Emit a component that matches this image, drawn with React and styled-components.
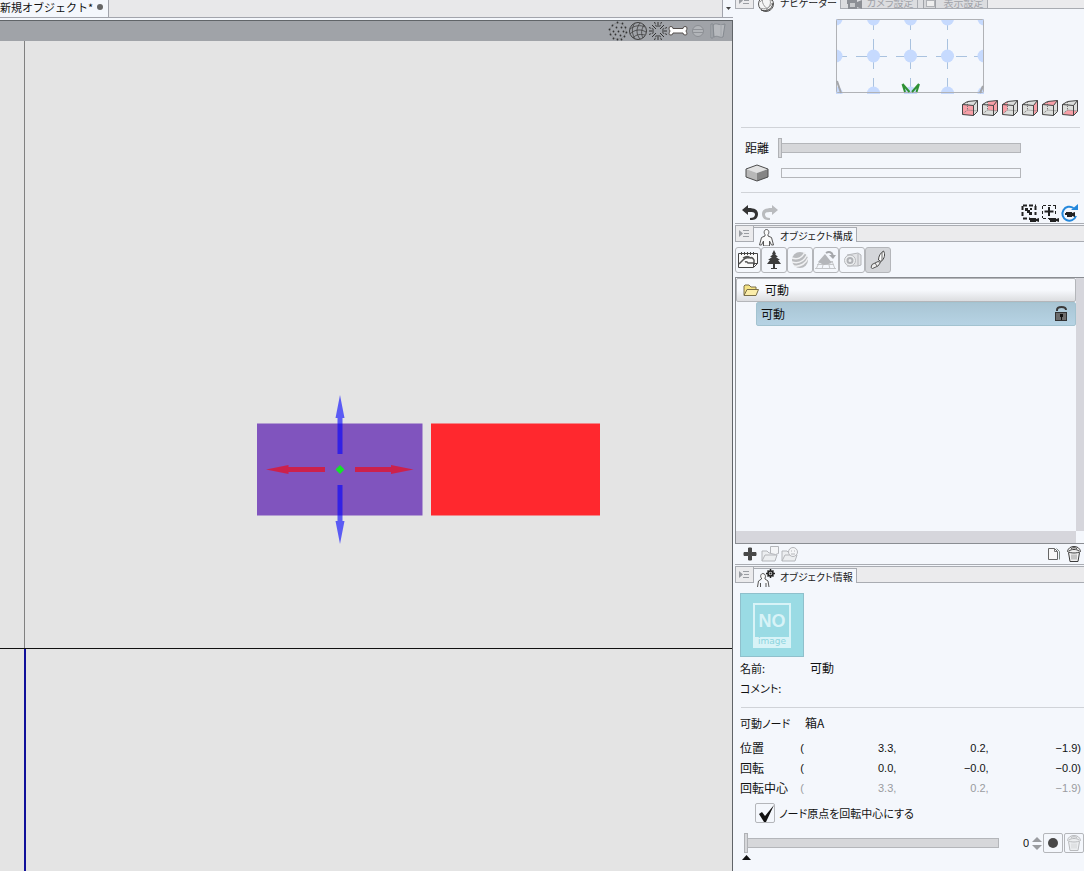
import { useState } from "react";
import styled, { createGlobalStyle } from "styled-components";

const GlobalStyle = createGlobalStyle`
  * {
    box-sizing: border-box;
  }
  body {
    margin: 0;
    overflow: hidden;
    background-color: #f4f7fc;
    color: #111;
    font-family: "Noto Sans CJK JP", sans-serif;
    font-size: 12px;
    line-height: 20px;
  }
  button, input {
    font: inherit;
    color: inherit;
  }
  svg {
    display: block;
    flex: none;
  }
`;

const Layout = styled.div`
  display: flex;
  height: 100vh;
  overflow: hidden;
`;

/* ---------- workspace ---------- */

const Workspace = styled.main`
  flex: 1;
  min-width: 0;
  display: flex;
  flex-direction: column;
`;

const DocumentTabs = styled.div`
  display: flex;
  justify-content: space-between;
  height: 18px;
  margin-bottom: 2px;
  background-color: #e8e8ea;
  border-bottom: 1px solid #a2a4ac;
`;

const DocumentTab = styled.button`
  display: flex;
  align-items: center;
  gap: 4px;
  height: 17px;
  padding: 0 5px 4px 0;
  border: none;
  border-right: 1px solid #a2a4ac;
  background-color: #f4f7fc;
  font-size: 11px;
  line-height: 14px;
`;

const UnsavedDot = styled.span`
  width: 6px;
  height: 6px;
  border-radius: 50%;
  background-color: #666;
`;

const TabMenuButton = styled.button`
  display: flex;
  align-items: center;
  justify-content: center;
  width: 11px;
  padding: 0;
  border: none;
  border-left: 1px solid #a2a4ac;
  background-color: #f4f7fc;
`;

const Viewport = styled.div`
  flex: 1;
  min-height: 0;
  display: flex;
  flex-direction: column;
  border-top: 1px solid #606468;
  border-right: 1px solid #606468;
`;

const ViewToolbar = styled.div`
  display: flex;
  justify-content: flex-end;
  align-items: center;
  height: 20px;
  padding-right: 4px;
  background-color: #a0a3a8;
`;

const IconButton = styled.button`
  display: flex;
  align-items: center;
  justify-content: center;
  width: 20px;
  height: 20px;
  padding: 0;
  border: none;
  background: none;
`;

const Scene = styled.svg`
  flex: 1;
  width: 100%;
  min-height: 0;
  background-color: #e4e4e4;
`;

/* ---------- side panels ---------- */

const Sidebar = styled.aside`
  width: 351px;
  flex: none;
  display: flex;
  flex-direction: column;
  padding-left: 2px;
`;

const Panel = styled.section`
  display: flex;
  flex-direction: column;
  flex: ${(props) => (props.$grow ? 1 : "none")};
  margin-bottom: 1px;
  border-bottom: ${(props) => (props.$grow ? "none" : "1px solid #a9acb2")};
`;

const HeaderClip = styled.div`
  display: flex;
  align-items: flex-end;
  height: ${(props) => (props.$scrolled ? "9px" : "17px")};
`;

const PanelHeader = styled.header`
  display: flex;
  align-items: flex-end;
  flex: 1;
  height: 17px;
  border-top: 1px solid #a9acb2;
  border-bottom: 1px solid #a9acb2;
  background-color: #ebebed;
`;

const PanelMenuButton = styled.button`
  display: flex;
  align-items: center;
  justify-content: center;
  width: 19px;
  height: 15px;
  padding: 0;
  border: solid #a9acb2;
  border-width: 0 1px;
  background: none;
`;

const PanelTab = styled.button`
  display: flex;
  align-items: flex-start;
  gap: 4px;
  height: ${(props) => (props.$active ? "15px" : "14px")};
  margin-bottom: ${(props) => (props.$active ? "-1px" : "0")};
  padding: 0 3px 0 ${(props) => (props.$active ? "2px" : "4px")};
  border: solid #a9acb2;
  border-width: 1px 1px 0 0;
  background-color: ${(props) => (props.$active ? "#f4f7fc" : "#dcdde0")};
  color: ${(props) => (props.$active ? "#222" : "#a0a2a8")};
  font-size: 10px;
  font-feature-settings: "palt";
  line-height: 15px;
  white-space: nowrap;
`;

const NavigatorMap = styled.div`
  display: flex;
  justify-content: center;
  padding-top: 10px;
`;

const CubeRow = styled.div`
  display: flex;
  justify-content: flex-end;
  padding: 4px 4px 9px 0;
`;

const Divider = styled.hr`
  width: auto;
  height: 1px;
  margin: 0 ${(props) => (props.$wide ? "0" : "4px")} 0 6px;
  border: none;
  background-color: #d0d3d8;
`;

const SliderRows = styled.div`
  display: grid;
  grid-template-columns: 33px 1fr;
  align-items: center;
  grid-auto-rows: 25px;
  padding: 7px 63px 7px 10px;
`;

const RangeInput = styled.input`
  appearance: none;
  display: block;
  width: 100%;
  min-width: 0;
  height: 20px;
  margin: 0;
  padding-left: ${(props) => (props.$bare ? "3px" : "0")};
  background: none;

  &::-webkit-slider-runnable-track {
    height: 10px;
    border: 1px solid #b4b6ba;
    background-color: ${(props) => (props.$bare ? "#f4f7fc" : "#d6d7da")};
  }
  &::-webkit-slider-thumb {
    appearance: none;
    width: 4px;
    height: 20px;
    margin: -6px 0 0 -1px;
    border: 1px solid #b0b2b6;
    background-color: #d6d7da;
    visibility: ${(props) => (props.$bare ? "hidden" : "visible")};
  }
`;

const ActionRow = styled.div`
  display: flex;
  align-items: center;
  justify-content: space-between;
  height: 20px;
  margin-top: ${(props) => (props.$spaced ? "10px" : "0")};
  padding: 0 ${(props) => (props.$spaced ? "4px" : "0")} 0 5px;
`;

const Group = styled.div`
  display: flex;
`;

const FilterBar = styled.div`
  display: flex;
  padding: 5px 0 4px;
`;

const FilterButton = styled.button`
  display: flex;
  align-items: center;
  justify-content: center;
  width: 26px;
  height: 26px;
  padding: 0;
  border: 1px solid #b4b6ba;
  border-radius: 3px;
  background-color: ${(props) => (props.$pressed ? "#d4d6da" : "#f4f7fc")};
`;

const TreeBox = styled.div`
  display: grid;
  grid-template-columns: 1fr 8px;
  grid-template-rows: 253px 12px;
  border: solid #8a8d92;
  border-width: 1px 0 1px 1px;
`;

const Tree = styled.ul`
  margin: 0;
  padding: 0;
  list-style: none;
`;

const TreeItem = styled.li`
  display: flex;
  align-items: center;
  height: 24px;
  margin-left: ${(props) => (props.$child ? "20px" : "0")};
  padding: 0 7px 0 ${(props) => (props.$child ? "4px" : "6px")};
  gap: 6px;
  border: 1px solid ${(props) => (props.$child ? "#a3c3d0" : "#b4b6ba")};
  border-radius: 2px;
  background: ${(props) =>
    props.$child
      ? "linear-gradient(#a9c5d4, #b6d3e4)"
      : "linear-gradient(#f7f9fd 50%, #dcdde0)"};
`;

const TreeName = styled.span`
  flex: 1;
`;

const ScrollTrack = styled.div`
  background-color: #d6d6dc;
`;

const InfoBody = styled.div`
  padding: ${(props) => (props.$node ? "0" : "10px")} 0 0 5px;
`;

const Thumbnail = styled.div`
  display: flex;
  width: 64px;
  height: 64px;
  padding: 9px 12px 8px;
  border: 1px solid #8fc0cc;
  background-color: #9adbe4;
`;

const ThumbnailFrame = styled.div`
  flex: 1;
  display: flex;
  flex-direction: column;
  border: 2px solid #d8f3f7;
  color: #d8f3f7;
  font-family: "Liberation Sans", sans-serif;
  font-size: 18px;
  font-weight: bold;
  line-height: 32px;
  text-align: center;
`;

const ThumbnailCaption = styled.span`
  flex: 1;
  background-color: #d8f3f7;
  color: #8bd3de;
  font-family: "DejaVu Sans", sans-serif;
  font-size: 9px;
  line-height: 9px;
  font-weight: normal;
`;

const Fields = styled.dl`
  display: grid;
  grid-template-columns: ${(props) => (props.$node ? "65px" : "70px")} 1fr;
  margin: ${(props) => (props.$node ? "5px 0" : "1px 0 9px")};
  font-feature-settings: "palt";

  dt {
    font-size: 11px;
  }
  dd {
    margin: 0;
  }
`;

const Transform = styled.table`
  width: 100%;
  padding-right: 3px;
  table-layout: fixed;
  border-collapse: separate;
  border-spacing: 0;

  th {
    width: 59px;
    padding: 0;
    font-weight: normal;
    text-align: left;
    white-space: nowrap;
  }
  th + td {
    width: 5px;
  }
  td {
    height: 20px;
    padding: 0;
    font-family: "Liberation Sans", sans-serif;
    font-size: 11px;
    text-align: right;
    white-space: nowrap;
  }
`;

const TransformRow = styled.tr`
  td {
    color: ${(props) => (props.$muted ? "#9a9ca0" : "#111")};
  }
`;

const CheckLabel = styled.label`
  display: flex;
  align-items: center;
  gap: 4px;
  padding: 5px 0 0 15px;
  font-size: 11px;
  font-feature-settings: "palt";
`;

const Checkbox = styled.input`
  appearance: none;
  width: 20px;
  height: 20px;
  margin: 0;
  border: 1px solid #b4b6ba;
  border-radius: 2px;

  &:checked {
    background: center / 18px 18px no-repeat
      url("data:image/svg+xml,%3Csvg xmlns='http://www.w3.org/2000/svg' viewBox='0 0 18 18'%3E%3Cpath d='M3 10l3-2 3 4L18 1 10 18H8z' fill='%23111'/%3E%3C/svg%3E");
  }
`;

const FrameRow = styled.div`
  display: grid;
  grid-template-columns: 1fr 31px 10px 20px 20px;
  align-items: center;
  column-gap: 1px;
  margin-top: 10px;
  padding-left: 4px;
`;

const FrameInput = styled.input`
  width: 31px;
  padding: 0 2px 0 0;
  border: none;
  background: none;
  font-family: "Liberation Sans", sans-serif;
  font-size: 11px;
  text-align: right;
`;

const Stepper = styled.div`
  display: flex;
  flex-direction: column;
  gap: 3px;
`;

const StepButton = styled.button`
  display: flex;
  padding: 0;
  border: none;
  background: none;
`;

const SquareButton = styled(IconButton)`
  border: 1px solid #b4b6ba;
  border-radius: 2px;
`;

const Marker = styled.div`
  padding: 2px 0 0 2px;
`;

/* ---------- icons ---------- */

const Svg = ({ w = 20, h = 20, children }) => (
  <svg width={w} height={h} viewBox={`0 0 ${w} ${h}`} fill="none" aria-hidden="true">
    {children}
  </svg>
);

const DotsIcon = () => (
  <Svg>
    <circle cx="10" cy="10" r="8" stroke="#777" strokeOpacity=".4" />
    <g fill="#333">
      {[[9, 1], [14, 2], [4, 4], [8, 6], [13, 6], [17, 6], [1, 8], [5, 10], [10, 10], [15, 10], [18, 11], [2, 13], [7, 13], [12, 14], [16, 15], [5, 17], [9, 18], [13, 18]].map(
        ([x, y]) => (
          <circle key={`${x}-${y}`} cx={x + 0.5} cy={y + 0.5} r=".9" />
        )
      )}
    </g>
  </Svg>
);

const MeshIcon = () => (
  <Svg>
    <circle cx="10" cy="10" r="8.500" stroke="#404040" />
    <g stroke="#404040" strokeWidth=".8">
      <path d="M2 8C7 4 13 4 17 6M2 13C7 8 13 8 18 11M5 17C8 13 13 13 17 14M7 2C3 7 4 13 7 18M12 2C8 7 8 13 12 18M16 4C13 9 13 13 15 17" />
    </g>
  </Svg>
);

const NormalsIcon = () => (
  <Svg>
    <g stroke="#333">
      <path d="M10 1v5M10 14v5M1 10h5M14 10h5M4 4l4 4M12 12l4 4M16 4l-4 4M8 12l-4 4" />
      <path d="M6.500 1l2 5M13.500 1l-2 5M6.500 19l2-5M13.500 19l-2-5M1 6.500l5 2M1 13.500l5-2M19 6.500l-5 2M19 13.500l-5-2" strokeDasharray="2 1" />
    </g>
  </Svg>
);

const BoneIcon = () => (
  <Svg>
    <path
      d="M1 7q0-1.500 2-1.500t2 2h10q0-2 2-2t2 1.500-1 3q1 2 1 3t-2 1-2-2H5q0 2-2 2t-2-1 1-3q-1-1.500-1-3z"
      fill="#fff"
      stroke="#55504e"
    />
  </Svg>
);

const ShadeIcon = () => (
  <Svg>
    <circle cx="10" cy="10" r="5.500" stroke="#8b8e93" fill="#b2b5b9" />
    <path d="M5 8.500h10M5 11.500h10" stroke="#8f9297" />
  </Svg>
);

const FlagIcon = () => (
  <Svg>
    <path d="M3 3h2v14H3zM5 4c4-3 5 1 12-1l-2 13c-4 1-5-2-9 0z" fill="#b6b9bd" stroke="#858a90" />
    <path d="M13 3v12" stroke="#a2a6ab" />
  </Svg>
);

const MenuIcon = () => (
  <Svg w={11} h={9}>
    <path d="M0 1l4 3.500L0 8zM4 1h6v1H4zM5 4h5v1H5zM4 7h6v1H4z" fill="#9a9da2" />
  </Svg>
);

const SphereIcon = () => (
  <Svg w={20} h={18}>
    <circle cx="10" cy="9" r="7.500" fill="#f5f5f5" stroke="#555" />
    <path d="M4 7c3-4 9-4 12-1M4 13c5 2 10 0 12-5M7 3c-2 4 1 9 6 12M12 2c4 4 3 9-2 13" stroke="#999" />
    <path d="M5 15c5 2 11 0 12-7" stroke="#444" />
  </Svg>
);

const CameraTabIcon = () => (
  <Svg w={18} h={15}>
    <path d="M2 3h10v4l5-2v9l-5-2v2H3V9H2z" fill="#8c8f95" />
    <rect x="5" y="8" width="5" height="4" fill="#c8cacd" />
  </Svg>
);

const DisplayTabIcon = () => (
  <Svg w={18} h={15}>
    <rect x="1.500" y="1.500" width="12" height="12" fill="#d5d6d9" stroke="#a0a3a8" />
    <rect x="4.500" y="5.500" width="8" height="6" fill="#eee" stroke="#b0b2b6" />
  </Svg>
);

const FigureIcon = () => (
  <Svg w={20} h={18}>
    <path
      d="M9 6.500C7.500 5 8 1.500 10.500 1.500S13.500 5 12 6.500V8l3.500 1.500L17.500 17h-2l-2-4v5h-6v-5l-2 4h-2L5.500 9.500 9 8z"
      fill="#fbfbfb"
      stroke="#555"
    />
  </Svg>
);

const FigureGearIcon = () => (
  <Svg w={20} h={18}>
    <path
      d="M5.500 9C4 8 4.500 4.500 7 4.500S10 8 9 9v1l3 2 1 6M5.500 9v1l-3 2-1 6M4.500 14v4M10 14v4"
      fill="#fbfbfb"
      stroke="#555"
    />
    <path d="M14.500 0v9M10 4.500h9M11.500 1.500l6 6M17.500 1.500l-6 6" stroke="#222" strokeWidth="1.500" />
    <circle cx="14.500" cy="4.500" r="2.500" fill="#ddd" stroke="#222" strokeWidth="1.500" />
    <circle cx="14.500" cy="4.500" r="1" fill="#222" />
  </Svg>
);

const NavigatorGrid = () => (
  <svg width="148" height="75" viewBox="0 0 148 75" role="img" aria-label="ナビゲーター">
    <path
      d="M37.500 0v11M37.500 20v30M37.500 59v16M74.500 0v11M74.500 20v30M74.500 59v16M111.500 0v11M111.500 20v30M111.500 59v16M0 37.500h11M20 37.500h31M60 37.500h31M100 37.500h12M112 37.500h6M120 37.500h11M138 37.500h10"
      stroke="#a9c2df"
    />
    <g fill="#c6dafe">
      {[0, 37.5, 74.5, 111.5, 148].map((x) =>
        [0, 37, 74].map((y) => <circle key={`${x}-${y}`} cx={x} cy={y} r="6.500" />)
      )}
    </g>
    <rect x=".5" y=".5" width="147" height="73" rx="1" fill="none" stroke="#b0b2b6" />
    <path d="M1 62l4 12M147 67l-3 7" stroke="#a4a6aa" strokeWidth="2" />
    <path d="M66.500 65l2.500 8M66.500 65l7 8M83 65l-2.500 8M83 65l-7 8" stroke="#2e9133" strokeWidth="2" />
  </svg>
);

const CUBE_FACES = [
  { label: "前", d: "M1.500 5.500l11 1v10l-11-1z" },
  { label: "後", d: "M7 2.500l9.500-1v10.500L7 11z" },
  { label: "左", d: "M1.500 5.500l5-3V11l-5 4.500z" },
  { label: "右", d: "M12.500 6.500l4-5v11l-4 4z" },
  { label: "上", d: "M1.500 5.500l5-3 10-1-4 5z" },
  { label: "下", d: "M1.500 15.500l5-4.500 10 1-4 4.500z" },
];

const CubeIcon = ({ face }) => (
  <Svg w={18} h={18}>
    <path d="M1.500 5.500l5-3 10-1v11l-4 4-11-1z" fill="#dcdedc" />
    <path d={face} fill="#f9a0a8" />
    <path d="M6.500 3v8l-5 4M6.500 11l10 1" stroke="#777" strokeDasharray="1 1" />
    <path d="M1.500 5.500l5-3 10-1v11l-4 4-11-1zM1.500 5.500l11 1 4-5M12.500 6.500v10" stroke="#444" />
  </Svg>
);

const BoxIcon = () => (
  <Svg w={24} h={18}>
    <path d="M1 5l11-4 11 4-11 4z" fill="#e2e2e2" />
    <path d="M1 5l11 4v8L1 13z" fill="#b8b8b8" />
    <path d="M23 5L12 9v8l11-4z" fill="#858585" />
    <path d="M1 5l11-4 11 4v8l-11 4-11-4z" stroke="#4c4c4c" />
  </Svg>
);

const UndoIcon = ({ redo }) => (
  <Svg>
    <path
      transform={redo ? "matrix(-1 0 0 1 20 0)" : undefined}
      d="M2 7l6-5v3c7 0 10 2 10 6 0 3-2 6-6 6h-2v-2c3 0 5-1 5-3.500S12 9 8 9v3z"
      fill={redo ? "#b9bbbe" : "#333"}
    />
  </Svg>
);

const FocusIcon = ({ plus }) => (
  <Svg>
    <path
      d="M3 2.500h13M2.500 3v12M15.500 3v9M3 15.500h7"
      stroke="#222"
      strokeWidth={plus ? 1 : 2}
      strokeDasharray={plus ? "3 2" : "4 2"}
    />
    {plus ? (
      <path d="M9 4v9M4.500 8.500h9" stroke="#222" strokeWidth="2" />
    ) : (
      <path d="M5 5h3v2h2v2h2v3h-3v-2H7V8H5zM10 5h2v2h-2z" fill="#222" />
    )}
    <path d="M9 15h7v1l3-1v4l-3-1v1h-6v-2H9z" fill="#222" />
  </Svg>
);

const ResetIcon = () => (
  <Svg>
    <path d="M16 13A7 7 0 1 1 13.500 5" stroke="#2488dc" strokeWidth="2" />
    <path d="M11 7h7V1z" fill="#2488dc" />
    <path d="M5 10h1v-1h6v1l3-1v5l-3-1v1H7v-2H5z" fill="#222" />
  </Svg>
);

const SceneFilterIcon = () => (
  <Svg w={22} h={20}>
    <path d="M1.500 3.500h19v10l-4 4h-15z" fill="#fafafa" stroke="#444" />
    <path d="M4.500 2v3M7.500 2v3M10.500 2v3M13.500 2v3M16.500 2v3" stroke="#444" />
    <path d="M2 14l4-4c2-2 4-3 6-2M6 8c3-2 6-2 7 0 2-1 3 0 4 2v5M8 12c2-1 3 1 3 1h6" stroke="#555" strokeWidth="1.500" />
    <path d="M16.500 17v-3.500h4" stroke="#444" />
  </Svg>
);

const TreeFilterIcon = () => (
  <Svg>
    <path
      d="M10 0l2 4h-1l3 3h-2l4 3h-2l3 4h-6v4h2v1H7v-1h2v-4H3l3-4H4l4-3H6l3-3H8z"
      fill="#3c3c3c"
    />
  </Svg>
);

const BallFilterIcon = () => (
  <Svg>
    <circle cx="10" cy="10" r="8" fill="#b9bbbe" />
    <path d="M2 8c5 2 10 0 13-6M2 12c7 2 12-1 15-7M4 16c7 1 12-3 14-8" stroke="#f0f1f3" strokeWidth="1.500" />
  </Svg>
);

const GroundFilterIcon = () => (
  <Svg w={22} h={20}>
    <path d="M4 11.500h14M2 14.500h17M0 18.500h21M5 11l-4 8M9 11l-2 8M13 11l2 8M17 11l3 8" stroke="#c4c6c9" />
    <path d="M10 4l7 9-8 2-6-3z" fill="#b4b6ba" />
    <path d="M11 3c3-2 6-1 7 3" stroke="#a5a7ab" strokeWidth="2" />
    <path d="M14 5h7l-3 4z" fill="#a5a7ab" />
  </Svg>
);

const CameraFilterIcon = () => (
  <Svg>
    <path d="M5 5l11-2 3 2v10l-3 1-11 0" fill="#e2e3e6" stroke="#b4b6ba" />
    <path d="M16 4v12" stroke="#b4b6ba" />
    <circle cx="8" cy="10.500" r="5.500" fill="#eceef0" stroke="#b8babd" />
    <circle cx="8" cy="10.500" r="2.500" stroke="#b0b2b6" strokeWidth="2" />
  </Svg>
);

const PartFilterIcon = () => (
  <Svg>
    <path d="M15.500 1c2 3 1 8-2.500 10.500L10.500 10c0-4 2-7 5-9z" fill="#fff" stroke="#444" />
    <path d="M10 11.500l2.500 1-2.500 3.500-5.500 2.500-1.500-1 1-3z" fill="#eee" stroke="#555" />
    <path d="M7 13l2 3M14 2v9" stroke="#666" />
  </Svg>
);

const FolderIcon = () => (
  <Svg w={16} h={14}>
    <path d="M1 12V3l1-1h4l2 2h5v3" fill="#f6e486" stroke="#7a6f48" />
    <path d="M1 12.500l3-6h11.500l-2.500 6z" fill="#fbedaa" stroke="#7a6f48" />
  </Svg>
);

const LockIcon = () => (
  <Svg w={14} h={18}>
    <path d="M3 6V5c0-4 9-4 9 0" stroke="#3a3a3a" strokeWidth="2" />
    <rect x="1.500" y="7.500" width="11" height="8" fill="#6c6c6c" stroke="#333" />
    <path d="M6 9h3v3H8v3H7v-3H6z" fill="#111" />
  </Svg>
);

const AddIcon = () => (
  <Svg>
    <path d="M8.500 4h3v4.500H16v3h-4.500V16h-3v-4.500H4v-3h4.500z" fill="#484848" stroke="#484848" />
  </Svg>
);

const FolderOutIcon = ({ round }) => (
  <Svg>
    <path d="M2 17V7h5l2 2h4M2 17l3-6h12l-2 6z" fill="#eceef0" stroke="#b4b6ba" />
    {round ? (
      <>
        <circle cx="13" cy="8" r="4.500" fill="#f4f5f7" stroke="#b4b6ba" />
        <path d="M11 7h1M14 7h1M11 10h4" stroke="#b4b6ba" />
      </>
    ) : (
      <path d="M10.500 2.500h8v7l-3 1-5-1z" fill="#f4f5f7" stroke="#b4b6ba" />
    )}
  </Svg>
);

const PageIcon = () => (
  <Svg>
    <path d="M4.500 4.500h6l3 3v8h-9z" fill="#f8f8f8" stroke="#666" />
    <path d="M10.500 4.500v3h3" stroke="#777" />
    <path d="M12.500 4.500l3 3v8" stroke="#7d8a84" />
  </Svg>
);

const TrashIcon = ({ faded }) => (
  <Svg w={18} h={18}>
    <g stroke={faded ? "#b9bbbe" : "#3c3c3c"} fill={faded ? "#eceef0" : "#f1f1f1"}>
      <path d="M3.500 7.500l1.500 9h8l1.500-9" />
      <path d="M7 9.500v5M9 9.500v5M11 9.500v5" strokeOpacity=".5" />
      <path d="M2.500 6.500C3 3 6 1.500 9 1.500s6 1.500 6.500 5c-3 2-10 2-13 0z" />
      <path d="M4 6c2-2 8-2 10 0M6 3.500c2-1 4-1 6 0" fill="none" />
    </g>
  </Svg>
);

const Triangle = ({ w, h, down, fill }) => (
  <Svg w={w} h={h}>
    <path d={down ? `M0 0h${w}L${w / 2} ${h}z` : `M0 ${h}h${w}L${w / 2} 0z`} fill={fill} />
  </Svg>
);

/* ---------- data ---------- */

const VIEW_TOOLS = [
  { label: "頂点", icon: DotsIcon },
  { label: "メッシュ", icon: MeshIcon },
  { label: "法線", icon: NormalsIcon },
  { label: "ボーン", icon: BoneIcon },
  { label: "陰影", icon: ShadeIcon },
  { label: "背面", icon: FlagIcon },
];

const FILTERS = [
  { label: "シーン", icon: SceneFilterIcon },
  { label: "背景", icon: TreeFilterIcon },
  { label: "素材", icon: BallFilterIcon },
  { label: "床面", icon: GroundFilterIcon },
  { label: "カメラ", icon: CameraFilterIcon },
  { label: "可動パーツ", icon: PartFilterIcon },
];

const TRANSFORMS = [
  { name: "位置", values: ["3.3", "0.2", "−1.9"] },
  { name: "回転", values: ["0.0", "−0.0", "−0.0"] },
  { name: "回転中心", values: ["3.3", "0.2", "−1.9"], muted: true },
];

function Header({ icon: Icon, title, scrolled, children }) {
  return (
    <HeaderClip $scrolled={scrolled}>
      <PanelHeader>
        <PanelMenuButton aria-label="メニュー">
          <MenuIcon />
        </PanelMenuButton>
        <PanelTab $active>
          <Icon />
          {title}
        </PanelTab>
        {children}
      </PanelHeader>
    </HeaderClip>
  );
}

function SceneView() {
  return (
    <Scene role="img" aria-label="3Dビュー">
      <g shapeRendering="crispEdges">
        <rect x="24" width="1" height="607" fill="#808080" />
        <rect x="24" y="608" width="2" height="100%" fill="#10109a" />
        <rect y="607" width="100%" height="1" fill="#111" />
      </g>
      <rect x="257" y="382.500" width="165.500" height="92" fill="#8054be" />
      <rect x="431" y="382.500" width="169" height="92" fill="#ff282e" />
      <g fill="#0000ff" fillOpacity=".6">
        <path d="M337.500 413V377H335.500L340 354l4.500 23h-2v36z" />
        <path d="M337.500 444v36h-2L340 503l4.500-23h-2v-36z" />
      </g>
      <g fill="#ff0000" fillOpacity=".6">
        <path d="M325 426H288.500v-2L266 428.500l22.500 4.500v-2H325z" />
        <path d="M355 426h36v-2l22.500 4.500L391 433v-2h-36z" />
      </g>
      <path d="M340 424l4.500 4.500L340 433l-4.500-4.500z" fill="#14e32a" />
    </Scene>
  );
}

function Navigator() {
  return (
    <Panel>
      <Header icon={SphereIcon} title="ナビゲーター" scrolled>
        <PanelTab>
          <CameraTabIcon />
          カメラ設定
        </PanelTab>
        <PanelTab>
          <DisplayTabIcon />
          表示設定
        </PanelTab>
      </Header>
      <NavigatorMap>
        <NavigatorGrid />
      </NavigatorMap>
      <CubeRow>
        {CUBE_FACES.map((face) => (
          <IconButton key={face.label} aria-label={face.label}>
            <CubeIcon face={face.d} />
          </IconButton>
        ))}
      </CubeRow>
      <Divider />
      <SliderRows>
        <label htmlFor="distance">距離</label>
        <RangeInput id="distance" type="range" defaultValue={0} />
        <label htmlFor="boxScale" aria-label="大きさ">
          <BoxIcon />
        </label>
        <RangeInput id="boxScale" type="range" defaultValue={0} disabled $bare />
      </SliderRows>
      <Divider />
      <ActionRow $spaced>
        <Group>
          <IconButton aria-label="元に戻す">
            <UndoIcon />
          </IconButton>
          <IconButton aria-label="やり直し" disabled>
            <UndoIcon redo />
          </IconButton>
        </Group>
        <Group>
          <IconButton aria-label="全体を表示">
            <FocusIcon />
          </IconButton>
          <IconButton aria-label="選択を表示">
            <FocusIcon plus />
          </IconButton>
          <IconButton aria-label="カメラをリセット">
            <ResetIcon />
          </IconButton>
        </Group>
      </ActionRow>
    </Panel>
  );
}

function ObjectTree() {
  return (
    <Panel>
      <Header icon={FigureIcon} title="オブジェクト構成" />
      <FilterBar>
        {FILTERS.map((filter, i) => (
          <FilterButton
            key={filter.label}
            aria-label={filter.label}
            $pressed={i === FILTERS.length - 1}
          >
            <filter.icon />
          </FilterButton>
        ))}
      </FilterBar>
      <TreeBox>
        <Tree>
          <TreeItem>
            <FolderIcon />
            <TreeName>可動</TreeName>
          </TreeItem>
          <TreeItem $child>
            <TreeName>可動</TreeName>
            <LockIcon />
          </TreeItem>
        </Tree>
        <ScrollTrack />
        <ScrollTrack />
      </TreeBox>
      <ActionRow>
        <Group>
          <IconButton aria-label="追加">
            <AddIcon />
          </IconButton>
          <IconButton aria-label="フォルダー" disabled>
            <FolderOutIcon />
          </IconButton>
          <IconButton aria-label="素材フォルダー" disabled>
            <FolderOutIcon round />
          </IconButton>
        </Group>
        <Group>
          <IconButton aria-label="複製">
            <PageIcon />
          </IconButton>
          <IconButton aria-label="削除">
            <TrashIcon />
          </IconButton>
        </Group>
      </ActionRow>
    </Panel>
  );
}

function ObjectInfo() {
  const [centered, setCentered] = useState(true);
  const [frame, setFrame] = useState(0);

  return (
    <Panel $grow>
      <Header icon={FigureGearIcon} title="オブジェクト情報" />
      <InfoBody>
        <Thumbnail>
          <ThumbnailFrame>
            NO
            <ThumbnailCaption>image</ThumbnailCaption>
          </ThumbnailFrame>
        </Thumbnail>
        <Fields>
          <dt>名前:</dt>
          <dd>可動</dd>
          <dt>コメント:</dt>
          <dd />
        </Fields>
      </InfoBody>
      <Divider $wide />
      <InfoBody $node>
        <Fields $node>
          <dt>可動ノード</dt>
          <dd>箱A</dd>
        </Fields>
        <Transform>
          <tbody>
            {TRANSFORMS.map((row) => (
              <TransformRow key={row.name} $muted={row.muted}>
                <th scope="row">{row.name}</th>
                <td>(</td>
                <td>{row.values[0]},</td>
                <td>{row.values[1]},</td>
                <td>{row.values[2]})</td>
              </TransformRow>
            ))}
          </tbody>
        </Transform>
        <CheckLabel>
          <Checkbox
            type="checkbox"
            checked={centered}
            onChange={(e) => setCentered(e.target.checked)}
          />
          ノード原点を回転中心にする
        </CheckLabel>
        <FrameRow>
          <RangeInput
            type="range"
            aria-label="フレーム"
            value={frame}
            onChange={(e) => setFrame(Number(e.target.value))}
          />
          <FrameInput
            aria-label="フレーム番号"
            value={frame}
            onChange={(e) => setFrame(Number(e.target.value) || 0)}
          />
          <Stepper>
            <StepButton aria-label="増やす" onClick={() => setFrame(frame + 1)}>
              <Triangle w={10} h={5} fill="#9a9ca0" />
            </StepButton>
            <StepButton aria-label="減らす" onClick={() => setFrame(Math.max(0, frame - 1))}>
              <Triangle w={10} h={5} down fill="#9a9ca0" />
            </StepButton>
          </Stepper>
          <SquareButton aria-label="登録">
            <Svg w={12} h={12}>
              <circle cx="6" cy="6" r="5" fill="#484848" />
            </Svg>
          </SquareButton>
          <SquareButton aria-label="登録を削除" disabled>
            <TrashIcon faded />
          </SquareButton>
        </FrameRow>
        <Marker>
          <Triangle w={9} h={5} fill="#111" />
        </Marker>
      </InfoBody>
    </Panel>
  );
}

export default function App() {
  return (
    <>
      <GlobalStyle />
      <Layout>
        <Workspace>
          <DocumentTabs>
            <DocumentTab>
              新規オブジェクト*
              <UnsavedDot />
            </DocumentTab>
            <TabMenuButton aria-label="タブ一覧">
              <Triangle w={5} h={3} down fill="#444" />
            </TabMenuButton>
          </DocumentTabs>
          <Viewport>
            <ViewToolbar>
              {VIEW_TOOLS.map((tool) => (
                <IconButton key={tool.label} aria-label={tool.label}>
                  <tool.icon />
                </IconButton>
              ))}
            </ViewToolbar>
            <SceneView />
          </Viewport>
        </Workspace>
        <Sidebar>
          <Navigator />
          <ObjectTree />
          <ObjectInfo />
        </Sidebar>
      </Layout>
    </>
  );
}
